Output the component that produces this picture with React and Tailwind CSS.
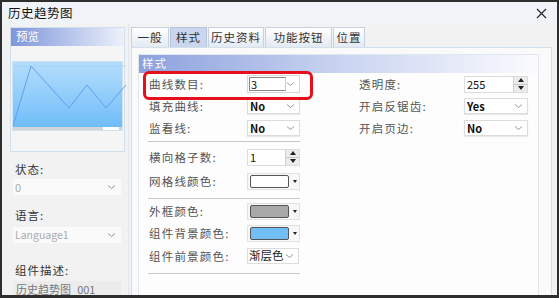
import React from "react"

const font = { fontFamily: '"Noto Sans CJK SC", "Noto Sans", sans-serif' }

function Chevron({ className = "" }) {
  return (
    <svg width="9" height="6" viewBox="0 0 9 6" className={className}>
      <path d="M1 1.5 L4.5 4.5 L8 1.5" fill="none" stroke="#8a8a8a" strokeWidth="0.9" />
    </svg>
  )
}

function Select({ value, width = "w-[53px]" }) {
  return (
    <div
      className={`${width} h-[16px] flex items-center justify-between border border-[#dcdcdc] bg-white pl-[2px] pr-[4px] shadow-[0_1px_1px_rgba(0,0,0,0.08)]`}
    >
      <span className="text-[11px] leading-none font-bold text-[#111]">{value}</span>
      <Chevron />
    </div>
  )
}

function Spinner({ value, width = "w-[53px]" }) {
  return (
    <div className={`${width} h-[17px] flex items-stretch border border-[#dcdcdc] bg-white`}>
      <div className="flex-1 flex items-center pl-[2px] text-[11px] leading-none text-[#111]">{value}</div>
      <div className="w-[14px] flex flex-col border-l border-[#d0d0d0] bg-[#ececec]">
        <div className="flex-1 flex items-center justify-center border-b border-[#c8c8c8]">
          <div className="w-0 h-0 border-l-[3.5px] border-r-[3.5px] border-b-[4px] border-l-transparent border-r-transparent border-b-[#222]" />
        </div>
        <div className="flex-1 flex items-center justify-center">
          <div className="w-0 h-0 border-l-[3.5px] border-r-[3.5px] border-t-[4px] border-l-transparent border-r-transparent border-t-[#222]" />
        </div>
      </div>
    </div>
  )
}

function ColorPick({ color }) {
  return (
    <div className="w-[53px] h-[17px] flex items-center border border-[#e2e2e2] bg-[#f7f7f7] pl-[2px] gap-[4px]">
      <div className="w-[39px] h-[13px] rounded-[2px] border border-[#555]" style={{ background: color }} />
      <div className="w-0 h-0 border-l-[2.5px] border-r-[2.5px] border-t-[3px] border-l-transparent border-r-transparent border-t-[#222]" />
    </div>
  )
}

function Row({ label, children, labelW = "w-[98px]" }) {
  return (
    <div className="h-[22px] flex items-center">
      <div className={`${labelW} text-[11.5px] leading-[14px] tracking-[1.2px] text-[#555]`}>{label}</div>
      {children}
    </div>
  )
}

function Sep() {
  return <div className="h-px bg-[#c8c8c8] w-[152px] ml-[-1px]" />
}

function LeftLabel({ children, className = "" }) {
  return (
    <div className={`pl-[5px] h-[14px] text-[11.5px] leading-[14px] tracking-[1px] text-[#333] ${className}`}>
      {children}
    </div>
  )
}

export default function App() {
  return (
    <div
      style={font}
      className="w-[559px] h-[298px] overflow-hidden border-2 border-b-[3px] border-[#2e2e2e] bg-[#f2f2f2] flex flex-col"
    >
      <div className="h-[22px] shrink-0 flex items-center justify-between pl-[6px] pr-[10px] bg-[#f0f3f7]">
        <span className="text-[12.5px] leading-none text-[#111] tracking-[0.5px]">历史趋势图</span>
        <svg width="11" height="11" viewBox="0 0 11 11">
          <path d="M1 1 L10 10 M10 1 L1 10" stroke="#222" strokeWidth="1.1" />
        </svg>
      </div>

      <div className="flex flex-1 min-h-0 pl-[8px]">
        <div className="w-[118px] shrink-0 pt-[3px] pr-[3px]">
          <div className="border border-[#d3dfea] bg-[#f5f5f5] h-[125px]">
            <div className="h-[18px] flex items-center pl-[5px] bg-gradient-to-r from-[#7f96d9] to-[#eef1fb] text-[11.5px] leading-none text-white">
              预览
            </div>
            <div className="mt-[15px] mx-[1px] h-[70px] relative bg-gradient-to-b from-[#b4ddfb] to-[#6bbcf9] border border-[#cfe3f3]">
              <svg width="113" height="70" viewBox="0 0 113 70" className="absolute inset-0">
                <line x1="0" y1="4" x2="113" y2="4" stroke="#9fd0f6" strokeWidth="0.8" />
                <polyline
                  points="0,64 18,4 56,46 74,23 93,46 113,23"
                  fill="none"
                  stroke="#5f9ef2"
                  strokeWidth="1"
                />
              </svg>
              <div className="absolute left-0 right-0 bottom-0 h-[3px] bg-[#d4d4d4] flex justify-end">
                <div className="w-[16px] h-full bg-white mr-[3px]" />
              </div>
            </div>
          </div>

          <LeftLabel className="mt-[10px]">状态:</LeftLabel>
          <div className="mt-[3px] ml-[3px] w-[108px] h-[16px] flex items-center justify-between bg-[#fafafa] pl-[2px] pr-[5px]">
            <span className="text-[11px] leading-none text-[#aaa]">0</span>
            <Chevron />
          </div>

          <LeftLabel className="mt-[13px]">语言:</LeftLabel>
          <div className="mt-[5px] ml-[3px] w-[108px] h-[16px] flex items-center justify-between bg-[#fafafa] pl-[2px] pr-[5px]">
            <span className="text-[10.5px] leading-none text-[#aaa]">Language1</span>
            <Chevron />
          </div>

          <LeftLabel className="mt-[20px]">组件描述:</LeftLabel>
          <div className="mt-[4px] ml-[3px] w-[108px] h-[17px] flex items-center bg-[#ececec] pl-[3px]">
            <span className="text-[11px] leading-none text-[#777]">历史趋势图_001</span>
          </div>
        </div>

        <div className="flex-1 flex flex-col min-w-0 pl-[2px] border-l border-[#e2e6ea]">
          <div className="h-[20px] mt-[3px] flex items-stretch text-[11.5px] leading-none tracking-[1px] text-[#333]">
            <div className="w-[38px] flex items-center justify-center border border-b-0 border-[#c6d3df] bg-gradient-to-b from-white to-[#e3eaf2]">
              一般
            </div>
            <div className="w-[37px] ml-px flex items-center justify-center border border-b-0 border-[#b6c5db] bg-[#cad5ee]">
              样式
            </div>
            <div className="w-[56px] ml-px flex items-center justify-center border border-b-0 border-[#c6d3df] bg-gradient-to-b from-white to-[#e3eaf2]">
              历史资料
            </div>
            <div className="w-[67px] ml-px flex items-center justify-center border border-b-0 border-[#c6d3df] bg-gradient-to-b from-white to-[#e3eaf2]">
              功能按钮
            </div>
            <div className="w-[32px] ml-px flex items-center justify-center border border-b-0 border-[#c6d3df] bg-gradient-to-b from-white to-[#e3eaf2]">
              位置
            </div>
          </div>

          <div className="flex-1 w-[421px] border border-b-0 border-[#d3dfea] bg-[#fafafa] pt-[6px] pl-[6px]">
            <div className="w-[401px] h-full border border-b-0 border-[#e1e7ee] bg-[#fdfdfd]">
              <div className="h-[18px] flex items-center pl-[3px] bg-gradient-to-r from-[#8da1dd] via-[#c9d3f0] to-[#fbfbfe] text-[11.5px] leading-none text-white tracking-[1px]">
                样式
              </div>
              <div className="flex pl-[10px]">
                <div className="w-[152px] flex flex-col">
                  <div className="relative">
                    <div className="absolute left-[-6px] top-[-2px] w-[170px] h-[29px] rounded-[6px] border-[3px] border-[#e5101b]" />
                    <Row label="曲线数目:">
                      <div className="relative z-10 w-[53px] h-[18px] flex items-center justify-between border border-[#d6d6d6] bg-white pl-[1px] pr-[4px]">
                        <div className="w-[38px] h-[14px] border border-[#888] border-r-[#ccc] text-[11px] leading-[12px] pl-[1px] text-[#111]">
                          3
                        </div>
                        <Chevron />
                      </div>
                    </Row>
                  </div>
                  <Row label="填充曲线:">
                    <Select value="No" />
                  </Row>
                  <Row label="监看线:">
                    <Select value="No" />
                  </Row>
                  <div className="mt-[2px]">
                    <Sep />
                  </div>
                  <div className="mt-[4px]">
                    <Row label="横向格子数:">
                      <Spinner value="1" />
                    </Row>
                  </div>
                  <div className="mt-[2px]">
                    <Row label="网格线颜色:">
                      <ColorPick color="#ffffff" />
                    </Row>
                  </div>
                  <div className="mt-[6px]">
                    <Sep />
                  </div>
                  <div className="mt-[1px]">
                    <Row label="外框颜色:">
                      <ColorPick color="#a9a9a9" />
                    </Row>
                  </div>
                  <Row label="组件背景颜色:">
                    <ColorPick color="#72bff7" />
                  </Row>
                  <div className="mt-[1px]">
                    <Row label="组件前景颜色:">
                      <div className="w-[52px] h-[16px] flex items-center justify-between border border-[#dcdcdc] bg-white pl-[1px] pr-[4px]">
                        <span className="text-[11.5px] leading-none text-[#222]">渐层色</span>
                        <Chevron />
                      </div>
                    </Row>
                  </div>
                  <div className="mt-[6px]">
                    <Sep />
                  </div>
                </div>

                <div className="ml-[58px] flex flex-col">
                  <Row label="透明度:" labelW="w-[105px]">
                    <Spinner value="255" width="w-[64px]" />
                  </Row>
                  <Row label="开启反锯齿:" labelW="w-[105px]">
                    <Select value="Yes" width="w-[64px]" />
                  </Row>
                  <Row label="开启页边:" labelW="w-[105px]">
                    <Select value="No" width="w-[64px]" />
                  </Row>
                </div>
              </div>
            </div>
          </div>
        </div>
      </div>
    </div>
  )
}
